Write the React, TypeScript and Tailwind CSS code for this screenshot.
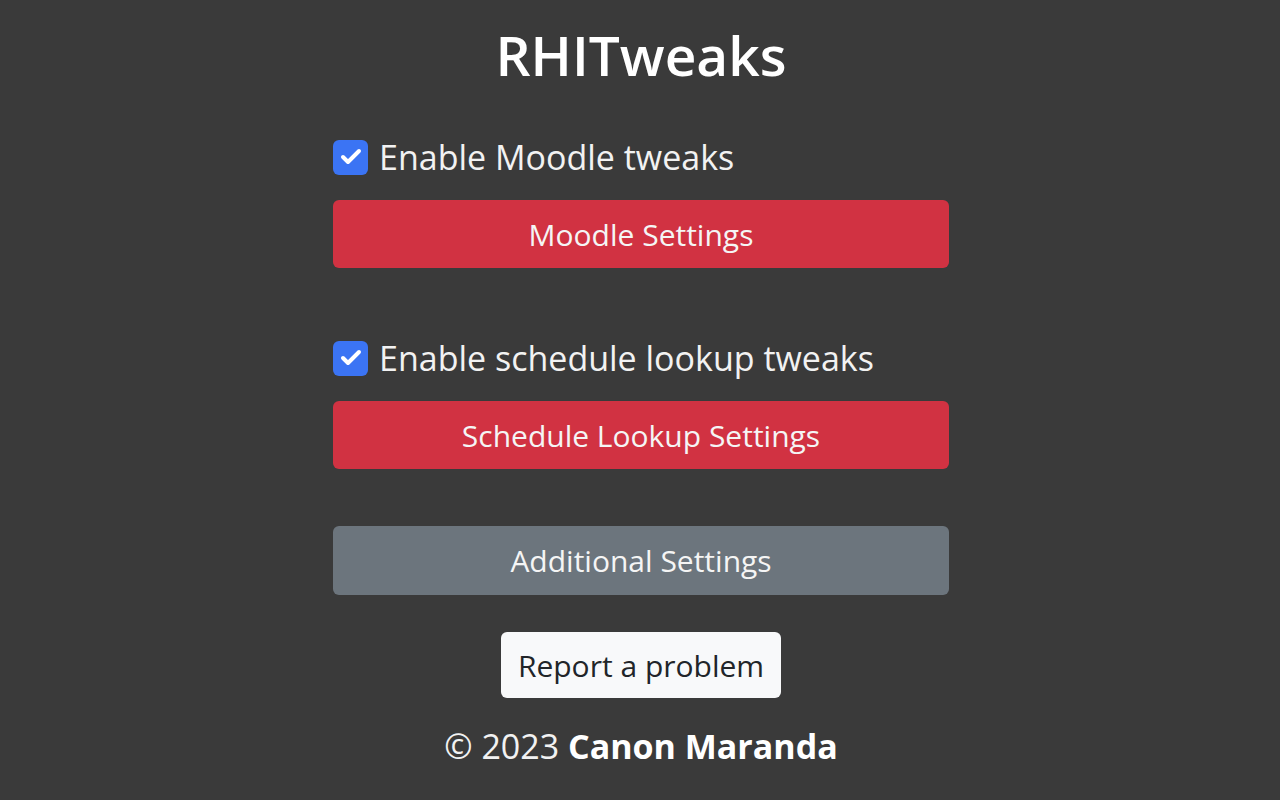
import { Check } from 'lucide-react';

const font = { fontFamily: '"Open Sans", "Noto Sans", sans-serif' };

function Toggle({ label }: { label: string }) {
  return (
    <label className="flex h-[40px] items-center gap-[11px] text-[34px] text-[#f2f2f2]">
      <span className="flex h-[35px] w-[35px] shrink-0 items-center justify-center rounded-[6px] bg-[#3b74f4]">
        <Check className="h-[24px] w-[24px] text-white" strokeWidth={4} />
      </span>
      <span className="leading-[40px]">{label}</span>
    </label>
  );
}

function WideButton({ children, tone }: { children: string; tone: 'red' | 'gray' }) {
  return (
    <button
      className={
        tone === 'red'
          ? 'flex h-[68px] w-full items-center justify-center rounded-[6px] bg-[#d13242] text-[30px] text-[#f5f5f5]'
          : 'flex h-[69px] w-full items-center justify-center rounded-[6px] bg-[#6c757d] text-[30px] text-[#f5f5f5]'
      }
    >
      {children}
    </button>
  );
}

export default function App() {
  return (
    <div className="flex min-h-[800px] w-full justify-center bg-[#3a3a3a] pl-[2px]" style={font}>
      <div className="flex w-[616px] flex-col pt-[20px]">
        <h1 className="h-[69px] text-center text-[55px] font-semibold leading-[69px] text-white">RHITweaks</h1>

        <div className="mt-[48px]">
          <Toggle label="Enable Moodle tweaks" />
        </div>
        <div className="mt-[23px]">
          <WideButton tone="red">Moodle Settings</WideButton>
        </div>

        <div className="mt-[70px]">
          <Toggle label="Enable schedule lookup tweaks" />
        </div>
        <div className="mt-[23px]">
          <WideButton tone="red">Schedule Lookup Settings</WideButton>
        </div>

        <div className="mt-[57px]">
          <WideButton tone="gray">Additional Settings</WideButton>
        </div>

        <div className="mt-[37px] flex justify-center">
          <button className="flex h-[66px] w-[280px] items-center justify-center rounded-[6px] bg-[#f8f9fa] text-[30px] text-[#212529]">
            Report a problem
          </button>
        </div>

        <p className="mt-[28px] h-[40px] text-center text-[34px] leading-[40px] text-[#f2f2f2]">
          © 2023 <b className="font-bold text-white">Canon Maranda</b>
        </p>
      </div>
    </div>
  );
}
